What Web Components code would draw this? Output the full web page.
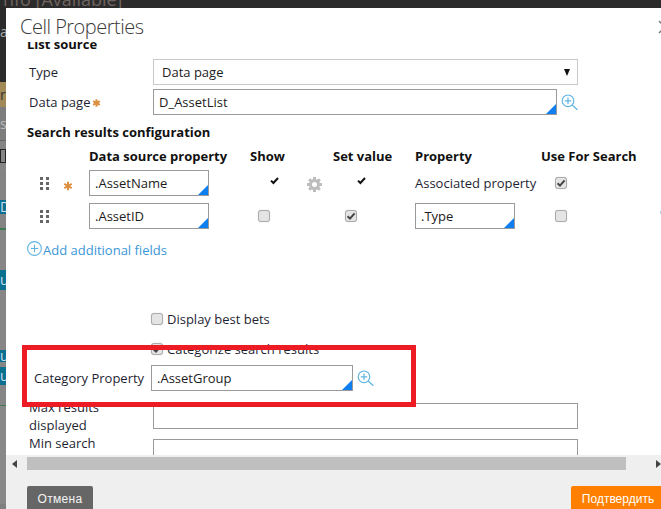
<!DOCTYPE html>
<html>
<head>
<meta charset="utf-8">
<title>Cell Properties</title>
<style>
  html, body { margin: 0; height: 509px; overflow: hidden; background: #808080; }
  body { font-family: "Open Sans", "Liberation Sans", sans-serif; font-size: 13px; color: #1c1c1c; }
  .sec { font-weight: 700; line-height: 18px; color: #111; padding-left: 21px; }
  .list-source { margin-top: -7px; }
  .search-config { margin-top: 8px; }
  form-row.first { margin-top: 6px; }
  form-row.next { margin-top: 4px; }
  results-table { margin-top: 6px; }
  add-link { margin-top: 12px; }
  check-line.best { margin-top: 51px; }
  check-line.cat { margin-top: 12px; }
  form-row.category { margin-top: 7px; --row-left: 28px; --label-w: 117px; }
  form-row.max { margin-top: 7px; }
</style>
</head>
<body>

<page-backdrop></page-backdrop>

<cell-dialog heading="Cell Properties">
  <div class="sec list-source">List source</div>
  <form-row class="first" label="Type"><select-box value="Data page"></select-box></form-row>
  <form-row class="next" label="Data page" required>
    <text-field value="D_AssetList" style="width:404px"></text-field><lookup-icon></lookup-icon>
  </form-row>
  <div class="sec search-config">Search results configuration</div>
  <results-table></results-table>
  <add-link>Add additional fields</add-link>
  <check-line class="best">Display best bets</check-line>
  <check-line class="cat" checked>Categorize search results</check-line>
  <form-row class="category" label="Category Property">
    <text-field value=".AssetGroup" style="width:202px"></text-field><lookup-icon></lookup-icon>
  </form-row>
  <form-row class="max" label="Max results displayed" inset><text-field plain style="width:425px"></text-field></form-row>
  <form-row label="Min search characters" inset><text-field plain style="width:425px"></text-field></form-row>

  <dialog-footer slot="footer"></dialog-footer>
</cell-dialog>

<script>
function shadow(el, html) {
  const root = el.attachShadow({ mode: 'open' });
  root.innerHTML = html;
  return root;
}

class PageBackdrop extends HTMLElement {
  connectedCallback() {
    shadow(this, `
    <style>
      :host { display: block; height: 509px; overflow: hidden; position: relative; }
      .top { height: 8px; background: #2b2b2b; overflow: hidden; color: #6f6460; font-size: 18px; line-height: 8px; white-space: nowrap; padding-left: 3px; }
      .strip { width: 6px; overflow: hidden; font-size: 14px; white-space: nowrap; color: #ccc; }
      .strip div { overflow: hidden; }
    </style>
    <div class="top"><span style="position:relative;top:-5px">nfo [Available]</span></div>
    <div class="strip">
      <div style="height:74px;background:#2b2b2b;color:#aaa;line-height:48px">a</div>
      <div style="height:25px;background:#a08b58;color:#333;line-height:25px">r</div>
      <div style="height:33px;background:#7d7d7d;color:#bbb;line-height:33px">s</div>
      <div style="height:33px;background:#858585;border-top:1px solid #666;box-sizing:border-box"><div style="width:4px;height:12px;margin-top:8px;border:1px solid #222"></div></div>
      <div style="height:27px;background:#848484"></div>
      <div style="height:14px;background:#0b6f90;color:#cde;line-height:14px">D</div>
      <div style="height:14px;background:#848484"></div>
      <div style="height:2px;background:#3d7a52"></div>
      <div style="height:40px;background:#868686"></div>
      <div style="height:20px;background:#0b6f90;color:#cde;line-height:20px">u</div>
      <div style="height:60px;background:#868686"></div>
      <div style="height:12px;background:#0b6f90;color:#cde;line-height:12px">u</div>
      <div style="height:5px;background:#868686"></div>
      <div style="height:18px;background:#0b6f90;color:#cde;line-height:18px">u</div>
      <div style="height:20px;background:#868686"></div>
      <div style="height:1px;background:#3d7a52"></div>
      <div style="height:98px;background:#888"></div>
    </div>`);
  }
}

class CellDialog extends HTMLElement {
  connectedCallback() {
    const title = this.getAttribute('heading');
    shadow(this, `
    <style>
      :host { display: flex; flex-direction: column; position: absolute; left: 6px; top: 8px; right: 0; bottom: 0; background: #fff; overflow: hidden; }
      .head { height: 34px; flex: none; padding-left: 14px; font-weight: 300; font-size: 20px; letter-spacing: -.5px; line-height: 38px; color: #3a3a3a; }
      .body { flex: 1; min-height: 0; overflow: hidden; }
      .close { position: absolute; right: -11px; top: 12px; }
      .red { position: absolute; left: 16px; top: 337px; width: 384px; height: 52px; border: 5px solid #ed1c24; }
      .dot { position: absolute; right: 0; top: 203px; width: 1px; height: 3px; background: #a9d3ee; }
    </style>
    <div class="head">${title}</div>
    <svg class="close" width="14" height="14" viewBox="0 0 14 14"><path d="M1 1L13 13M13 1L1 13" stroke="#777" stroke-width="1.5"/></svg>
    <div class="body"><slot></slot></div>
    <slot name="footer"></slot>
    <div class="red"></div>
    <div class="dot"></div>`);
  }
}

class FormRow extends HTMLElement {
  connectedCallback() {
    const star = this.hasAttribute('required')
      ? `<svg class="star" width="9" height="10" viewBox="0 0 10 10"><path d="M5 .8V9.2M1.3 2.9L8.7 7.1M8.7 2.9L1.3 7.1" stroke="#db8f3f" stroke-width="2.2"/></svg>` : '';
    shadow(this, `
    <style>
      :host { display: grid; grid-template-columns: var(--label-w, 124px) 1fr; padding-left: var(--row-left, 23px); align-items: center; line-height: 18px; }
      :host([inset]) { align-items: start; }
      .label { color: #1f1f33; }
      :host([inset]) .field { padding-top: 5px; }
      .field { display: flex; align-items: center; min-width: 0; }
      .star { margin-left: 2px; vertical-align: -1px; }
    </style>
    <div class="label">${this.getAttribute('label')}${star}</div>
    <div class="field"><slot></slot></div>`);
  }
}

class TextField extends HTMLElement {
  connectedCallback() {
    const v = this.getAttribute('value') || '';
    shadow(this, `
    <style>
      :host { display: block; box-sizing: border-box; height: 26px; flex: none; border: 1px solid #9a9a9a; background: #fff; position: relative; line-height: 24px; padding-left: 5px; color: #1c1c1c; white-space: nowrap; }
      .corner { position: absolute; right: 0; bottom: 0; width: 0; height: 0; border-style: solid; border-width: 0 0 10px 10px; border-color: transparent transparent #0f7ff0 transparent; }
      :host([plain]) .corner { display: none; }
    </style>
    ${v}<span class="corner"></span>`);
  }
}

class SelectBox extends HTMLElement {
  connectedCallback() {
    shadow(this, `
    <style>
      :host { display: flex; align-items: center; justify-content: space-between; box-sizing: border-box; width: 425px; height: 26px; border: 1px solid #c8c8c8; padding: 0 7px 0 8px; }
      i { width: 0; height: 0; border-style: solid; border-width: 7px 3px 0 3px; border-color: #111 transparent transparent transparent; }
    </style>
    ${this.getAttribute('value')}<i></i>`);
  }
}

class LookupIcon extends HTMLElement {
  connectedCallback() {
    shadow(this, `
    <style>:host { display: block; flex: none; width: 17px; height: 17px; margin-left: 4px; }</style>
    <svg width="17" height="17" viewBox="0 0 17 17" fill="none" stroke="#5fb4e2">
      <circle cx="7" cy="6.8" r="5.8" stroke-width="1.2"/>
      <path d="M3.8 6.8H10.2M7 3.6V10" stroke-width="1.2"/>
      <path d="M11.2 11L16.4 15.8" stroke-width="1.2"/>
    </svg>`);
  }
}

class CheckBox extends HTMLElement {
  connectedCallback() {
    const tick = this.hasAttribute('checked')
      ? `<svg width="10" height="10" viewBox="0 0 10 10"><path d="M1.6 5.2L4 7.6L8.6 2.4" fill="none" stroke="#444" stroke-width="2"/></svg>` : '';
    shadow(this, `
    <style>
      :host { display: inline-flex; align-items: center; justify-content: center; box-sizing: border-box; width: 12px; height: 12px; border: 1px solid #ababab; border-radius: 3px; background: #e4e4e4; box-shadow: 0 0 1px #bbb; flex: none; }
    </style>${tick}`);
  }
}

class CheckLine extends HTMLElement {
  connectedCallback() {
    shadow(this, `
    <style>
      :host { display: flex; align-items: center; gap: 4px; padding-left: 145px; line-height: 18px; color: #1f1f33; }
    </style>
    <check-box ${this.hasAttribute('checked') ? 'checked' : ''}></check-box><slot></slot>`);
  }
}

class ResultsTable extends HTMLElement {
  connectedCallback() {
    const tick = `<svg width="9" height="8" viewBox="0 0 9 8"><path d="M1 3.6L3.4 6L8 1" fill="none" stroke="#111" stroke-width="2"/></svg>`;
    const grip = `<div class="grip">${'<i></i>'.repeat(6)}</div>`;
    const star = `<svg class="star" width="10" height="10" viewBox="0 0 10 10"><path d="M5 .8V9.2M1.3 2.9L8.7 7.1M8.7 2.9L1.3 7.1" stroke="#db8f3f" stroke-width="2"/></svg>`;
    let teeth = '';
    for (let a = 0; a < 360; a += 45) teeth += `<rect x="6" y="0" width="3" height="3" transform="rotate(${a} 7.5 7.5)"/>`;
    const gear = `<svg class="gear" width="15" height="15" viewBox="0 0 15 15" fill="#bdbdbd"><circle cx="7.5" cy="7.5" r="4" fill="none" stroke="#bdbdbd" stroke-width="3"/>${teeth}</svg>`;
    shadow(this, `
    <style>
      :host { display: grid; grid-template-columns: 35px 27px 161px 83px 82px 126px 120px; grid-template-rows: 18px 31px 33px; padding-left: 21px; align-items: end; line-height: 18px; }
      .th { font-weight: 700; color: #111; white-space: nowrap; }
      .grip { display: grid; grid-template-columns: 3px 3px; gap: 2px 3px; margin-left: 13px; }
      .grip i { width: 3px; height: 3px; background: #666; }
      .star { margin-left: 1px; margin-top: 5px; display: block; }
      .cell { display: flex; align-items: center; height: 26px; }
      .gear { display: block; position: relative; top: 1px; flex: none; }
      .assoc { color: #1f1f33; }
    </style>
    <div></div><div></div>
    <div class="th">Data source property</div><div class="th">Show</div><div class="th">Set value</div><div class="th">Property</div><div class="th">Use For Search</div>

    <div class="cell">${grip}</div><div class="cell">${star}</div>
    <div class="cell"><text-field value=".AssetName" style="width:120px"></text-field></div>
    <div class="cell"><span style="margin-left:20px;display:flex;margin-top:-4px;width:37px">${tick}</span><span>${gear}</span></div>
    <div class="cell"><span style="margin-left:24px;display:flex;margin-top:-4px">${tick}</span></div>
    <div class="cell assoc">Associated property</div>
    <div class="cell"><check-box checked style="margin-left:14px"></check-box></div>

    <div class="cell">${grip}</div><div class="cell"></div>
    <div class="cell"><text-field value=".AssetID" style="width:120px"></text-field></div>
    <div class="cell"><check-box style="margin-left:8px"></check-box></div>
    <div class="cell"><check-box checked style="margin-left:12px"></check-box></div>
    <div class="cell"><text-field value=".Type" style="width:100px"></text-field></div>
    <div class="cell"><check-box style="margin-left:14px"></check-box></div>`);
  }
}

class AddLink extends HTMLElement {
  connectedCallback() {
    shadow(this, `
    <style>
      :host { display: flex; align-items: flex-start; padding-left: 21px; color: #3b97d6; line-height: 18px; height: 18px; }
      svg { flex: none; margin-right: 1px; }
    </style>
    <svg width="15" height="15" viewBox="0 0 15 15" fill="none" stroke="#5fb4e2" stroke-width="1.1"><circle cx="7.5" cy="7.5" r="6.9"/><path d="M3.8 7.5H11.2M7.5 3.8V11.2"/></svg>
    <span><slot></slot></span>`);
  }
}

class DialogFooter extends HTMLElement {
  connectedCallback() {
    shadow(this, `
    <style>
      :host { display: block; flex: none; height: 54px; background: #efefef; overflow: hidden; }
      .scroll { display: flex; align-items: center; height: 13px; margin-top: 2px; }
      .left { width: 0; height: 0; margin-left: 6px; border-style: solid; border-width: 4px 5px 4px 0; border-color: transparent #444 transparent transparent; }
      .thumb { width: 600px; height: 13px; background: #bfbfbf; margin-left: 10px; }
      .right { width: 0; height: 0; margin-left: 30px; border-style: solid; border-width: 4px 0 4px 5px; border-color: transparent transparent transparent #444; }
      .btns { display: flex; justify-content: space-between; margin-top: 16px; padding-left: 21px; }
      .btn { height: 30px; border-radius: 2px; color: #f4f4f4; font: 12px/27px "Liberation Sans", sans-serif; text-align: center; box-sizing: border-box; }
      .cancel { width: 66px; background: #666; letter-spacing: .3px; }
      .ok { width: 94px; margin-right: -4px; background: #ff8000; color: #fff; }
    </style>
    <div class="scroll"><i class="left"></i><div class="thumb"></div><i class="right"></i></div>
    <div class="btns"><div class="btn cancel">Отмена</div><div class="btn ok">Подтвердить</div></div>`);
  }
}

customElements.define('page-backdrop', PageBackdrop);
customElements.define('cell-dialog', CellDialog);
customElements.define('form-row', FormRow);
customElements.define('text-field', TextField);
customElements.define('select-box', SelectBox);
customElements.define('lookup-icon', LookupIcon);
customElements.define('check-box', CheckBox);
customElements.define('check-line', CheckLine);
customElements.define('results-table', ResultsTable);
customElements.define('add-link', AddLink);
customElements.define('dialog-footer', DialogFooter);
</script>
</body>
</html>
